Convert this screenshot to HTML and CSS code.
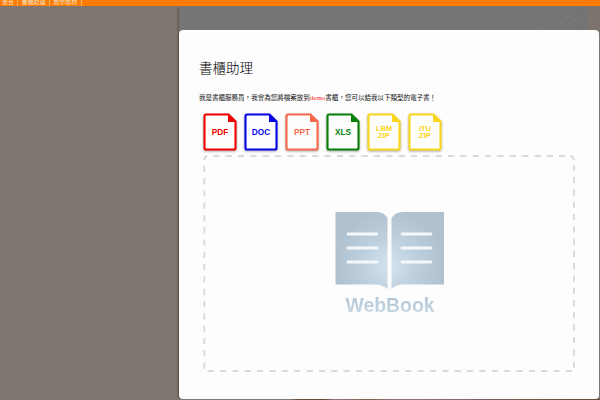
FILE: index.html
```html
<!DOCTYPE html>
<html lang="zh-Hant">
<head>
<meta charset="utf-8">
<title>書櫃助理</title>
<link rel="stylesheet" href="styles.css">
</head>
<body>
<nav class="nav"><a>後台</a><a>書櫃助理</a><a>教學教材</a></nav>
<main class="page">
  <div class="banner">
    <svg width="421" height="24" viewBox="0 0 421 24"><g stroke="#7b7b79" fill="none"><path d="M370 24L392 9M356 24L380 12"/><path d="M379 24L403 3M392 24L410 15" stroke="#6e6e6c"/></g></svg>
  </div>
  <section class="dialog">
    <h1 class="title">書櫃助理</h1>
    <p class="intro">我是書櫃服務員，我會為您將檔案放到<span class="user">demo</span>書櫃，您可以給我以下類型的電子書！</p>
    <div class="types">
      <div class="type pdf"><svg viewBox="0 0 35 39"><path class="sheet" d="M3 1.5H25.5L32.5 8.5V35Q32.5 36.5 31 36.5H3Q1.5 36.5 1.5 35V3Q1.5 1.5 3 1.5Z"/><path class="fold" d="M25 1V9H33Z"/></svg><span>PDF</span></div>
      <div class="type doc"><svg viewBox="0 0 35 39"><path class="sheet" d="M3 1.5H25.5L32.5 8.5V35Q32.5 36.5 31 36.5H3Q1.5 36.5 1.5 35V3Q1.5 1.5 3 1.5Z"/><path class="fold" d="M25 1V9H33Z"/></svg><span>DOC</span></div>
      <div class="type ppt"><svg viewBox="0 0 35 39"><path class="sheet" d="M3 1.5H25.5L32.5 8.5V35Q32.5 36.5 31 36.5H3Q1.5 36.5 1.5 35V3Q1.5 1.5 3 1.5Z"/><path class="fold" d="M25 1V9H33Z"/></svg><span>PPT</span></div>
      <div class="type xls"><svg viewBox="0 0 35 39"><path class="sheet" d="M3 1.5H25.5L32.5 8.5V35Q32.5 36.5 31 36.5H3Q1.5 36.5 1.5 35V3Q1.5 1.5 3 1.5Z"/><path class="fold" d="M25 1V9H33Z"/></svg><span>XLS</span></div>
      <div class="type zip"><svg viewBox="0 0 35 39"><path class="sheet" d="M3 1.5H25.5L32.5 8.5V35Q32.5 36.5 31 36.5H3Q1.5 36.5 1.5 35V3Q1.5 1.5 3 1.5Z"/><path class="fold" d="M25 1V9H33Z"/></svg><span>LBM<br>ZIP</span></div>
      <div class="type zip"><svg viewBox="0 0 35 39"><path class="sheet" d="M3 1.5H25.5L32.5 8.5V35Q32.5 36.5 31 36.5H3Q1.5 36.5 1.5 35V3Q1.5 1.5 3 1.5Z"/><path class="fold" d="M25 1V9H33Z"/></svg><span>ITU<br>ZIP</span></div>
    </div>
    <div class="drop">
      <svg class="outline" width="372" height="218" viewBox="0 0 372 218">
        <g stroke="#dadada" stroke-width="2" fill="none">
          <path stroke-dasharray="6.2 6.15" d="M10.3 1H367"/>
          <path stroke-dasharray="6.2 6.15" d="M4.7 216H369"/>
          <path stroke-dasharray="6.2 6.1" d="M1.3 213.7V8"/>
          <path stroke-dasharray="6.2 6.1" d="M371 212.7V8"/>
          <path d="M1.3 5Q1.3 2 4 1M367 1Q370 1 371 5"/>
        </g>
      </svg>
      <svg class="book" width="110" height="80" viewBox="0 0 110 80">
        <defs><radialGradient id="glow" gradientUnits="userSpaceOnUse" cx="54" cy="54" r="54"><stop offset="0" stop-color="#d3e4f1"/><stop offset=".5" stop-color="#bed0de"/><stop offset="1" stop-color="#b0c1cf"/></radialGradient></defs>
        <g fill="url(#glow)"><path d="M.5 1H42Q49 1 52.5 7V78Q47 73.5 41 73.5H.5Z"/><path d="M109 1H68Q60 1 56.5 7V78Q61 73.5 68 73.5H109Z"/></g>
        <g stroke="#f5f7f9" stroke-width="2.8" stroke-linecap="round"><path d="M13 23H42M13 37H42M13 51H42M67 23H96M67 37H96M67 51H96"/></g>
      </svg>
      <div class="brand">WebBook</div>
    </div>
  </section>
  <div class="shelf"></div>
</main>
</body>
</html>
```
FILE: styles.css
```css
* { box-sizing: border-box; }
body { margin: 0; width: 600px; height: 400px; overflow: hidden; background: #7f776f; font-family: "Liberation Sans", "Noto Sans CJK TC", sans-serif; }
.nav { height: 6px; overflow: hidden; background: #ff7b00; display: flex; align-items: flex-end; color: #ffe2c5; }
.nav a { font-size: 6px; line-height: 8px; height: 8px; padding: 0 3.3px; border-right: 1px solid #ffb96f; white-space: nowrap; }
.nav a:first-child { padding-left: 2px; }
.page { margin-left: 179px; height: 394px; display: flex; flex-direction: column; }
.banner { height: 24px; background: #757575; border-right: 11px solid #7d756d; overflow: hidden; box-shadow: -1px 1px 2px #554f49; clip-path: inset(0 0 0 -4px); }
.dialog { height: 369px; flex: none; background: #fdfdfd; border-radius: 4px; box-shadow: -1px 0 2px #4d4945; padding: 29px 25px 0 20px; display: flex; flex-direction: column; margin-right: 1px; }
.title { margin: 0; font-family: "Liberation Serif", "Noto Sans CJK TC", serif; font-size: 13.5px; line-height: 20px; font-weight: 300; color: #000; }
.intro { margin: 13px 0 0; font-size: 6.52px; line-height: 12px; white-space: nowrap; color: #111; }
.user { color: #f22; font-family: "Liberation Serif", serif; font-size: 7px; line-height: 1; }
.types { display: flex; gap: 6px; margin: 9px 0 0 3.5px; height: 42px; }
.type { display: grid; place-items: center; width: 35px; height: 39px; color: var(--c); font-weight: 700; font-size: 8.3px; line-height: 8px; text-align: center; }
.type svg, .type span { grid-area: 1 / 1; }
.type span { z-index: 1; margin-bottom: 2px; }
.type svg { width: 35px; height: 39px; filter: drop-shadow(0 1px 1px #aaa); }
.sheet { fill: #fdfdfd; stroke: var(--c); stroke-width: 2.1; }
.fold { fill: var(--c); }
.pdf { --c: #f00000; }
.doc { --c: #0505e8; }
.ppt { --c: #f8694c; }
.xls { --c: #078007; }
.zip { --c: #fad71c; }
.zip span { font-size: 7.6px; line-height: 7.5px; margin-bottom: 1px; }
.drop { height: 218px; margin-left: 4px; width: 372px; position: relative; display: flex; flex-direction: column; align-items: center; padding: 56px 0 0 2px; }
.outline { position: absolute; left: 0; top: 0; }
.brand { font-size: 19.4px; line-height: 23px; font-weight: 700; margin-top: 3px; background: linear-gradient(#b0c1cf, #cbdce9); -webkit-background-clip: text; background-clip: text; color: transparent; }
.shelf { height: 1px; background: linear-gradient(90deg, #827b72 110px, #654a36 120px 145px, #90777e 155px, #7d6552 190px, #90777e 220px, #65513d 400px); }
```
